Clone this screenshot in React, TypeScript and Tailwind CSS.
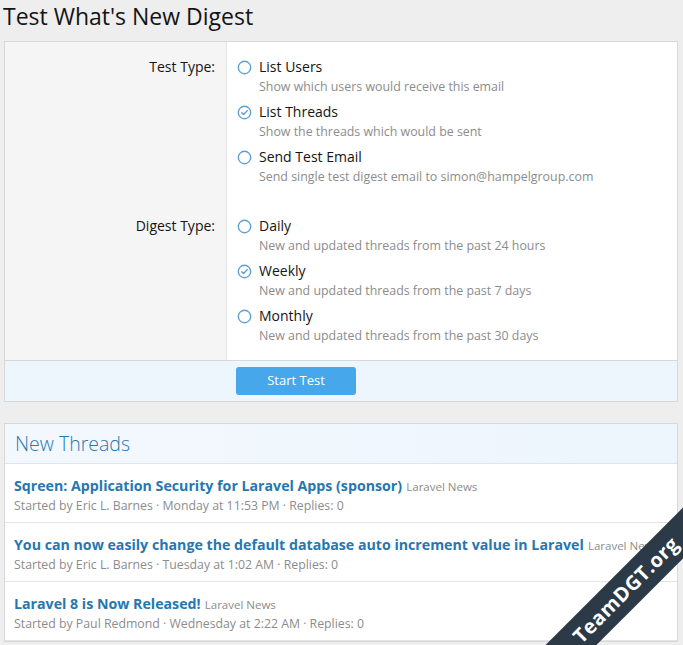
import React from "react";

const testTypes = [
  { label: "List Users", hint: "Show which users would receive this email", checked: false },
  { label: "List Threads", hint: "Show the threads which would be sent", checked: true },
  { label: "Send Test Email", hint: "Send single test digest email to simon@hampelgroup.com", checked: false },
];

const digestTypes = [
  { label: "Daily", hint: "New and updated threads from the past 24 hours", checked: false },
  { label: "Weekly", hint: "New and updated threads from the past 7 days", checked: true },
  { label: "Monthly", hint: "New and updated threads from the past 30 days", checked: false },
];

const threads = [
  {
    title: "Sqreen: Application Security for Laravel Apps (sponsor)",
    forum: "Laravel News",
    meta: "Started by Eric L. Barnes · Monday at 11:53 PM · Replies: 0",
  },
  {
    title: "You can now easily change the default database auto increment value in Laravel",
    forum: "Laravel News",
    meta: "Started by Eric L. Barnes · Tuesday at 1:02 AM · Replies: 0",
  },
  {
    title: "Laravel 8 is Now Released!",
    forum: "Laravel News",
    meta: "Started by Paul Redmond · Wednesday at 2:22 AM · Replies: 0",
  },
];

const Radio = ({ checked }: { checked: boolean }) => (
  <svg width="15" height="15" viewBox="0 0 16 16" className="mt-[3px] shrink-0">
    <circle cx="8" cy="8" r="6.6" fill="white" stroke="#5e9fd0" strokeWidth="1.5" />
    {checked && (
      <path d="M5 8.2l2 2 4-4.2" fill="none" stroke="#5e9fd0" strokeWidth="1.5" strokeLinecap="round" strokeLinejoin="round" />
    )}
  </svg>
);

type Option = { label: string; hint: string; checked: boolean };

const FormRow = ({ label, options }: { label: string; options: Option[] }) => (
  <div className="flex">
    <div className="w-[222px] shrink-0 bg-[#f5f5f5] border-r border-[#e2e2e2] py-[15px] pr-[11px] text-right text-[14px] leading-[20px] text-[#141414]">
      {label}
    </div>
    <div className="flex-1 py-[15px] pl-[10px] flex flex-col gap-[6px]">
      {options.map((o) => (
        <div key={o.label} className="flex gap-[7px]">
          <Radio checked={o.checked} />
          <div>
            <div className="text-[14px] leading-[20px] text-[#141414]">{o.label}</div>
            <div className="text-[12.4px] leading-[19px] text-[#8c8c8c]">{o.hint}</div>
          </div>
        </div>
      ))}
    </div>
  </div>
);

export default function App() {
  return (
    <div
      className="relative h-[645px] overflow-hidden bg-[#eeeeee]"
      style={{ fontFamily: '"Open Sans", "Noto Sans", sans-serif' }}
    >
      <h1 className="pl-[3px] pt-[1px] text-[23px] leading-[30px] text-[#141414] font-normal">
        Test What's New Digest
      </h1>

      <div className="mt-[10px] ml-[4px] mr-[5px] border border-[#d8d8d8] bg-white">
        <FormRow label="Test Type:" options={testTypes} />
        <FormRow label="Digest Type:" options={digestTypes} />
        <div className="flex border-t border-[#d8d8d8] bg-[#edf6fd] py-[6px]">
          <div className="w-[231px] shrink-0" />
          <button className="w-[120px] h-[28px] rounded-[3px] bg-[#47a7eb] text-white text-[13px]">
            Start Test
          </button>
        </div>
      </div>

      <div className="mt-[21px] ml-[4px] mr-[5px] border border-[#d8d8d8] bg-white">
        <div className="h-[40px] flex items-center px-[10px] border-b border-[#dfe5ea] bg-gradient-to-r from-[#f3f8fd] to-[#edf6fd]">
          <h2 className="text-[19.5px] font-light text-[#2577b1]">New Threads</h2>
        </div>
        {threads.map((t) => (
          <div key={t.title} className="h-[59px] border-b border-[#e5e5e5] px-[9px] pt-[11px]">
            <div className="leading-[20px] whitespace-nowrap">
              <span className="text-[14.2px] font-bold text-[#2577b1]">{t.title}</span>{" "}
              <span className="text-[11.5px] text-[#8c8c8c]">{t.forum}</span>
            </div>
            <div className="text-[12.3px] leading-[18px] text-[#8c8c8c]">{t.meta}</div>
          </div>
        ))}
      </div>

      <div className="absolute left-[476px] top-[572px] w-[300px] h-[36px] -rotate-45 bg-[#2c3a48] flex items-center justify-center">
        <span className="text-white font-bold text-[20px] tracking-[0.5px]">TeamDGT.org</span>
      </div>
    </div>
  );
}
